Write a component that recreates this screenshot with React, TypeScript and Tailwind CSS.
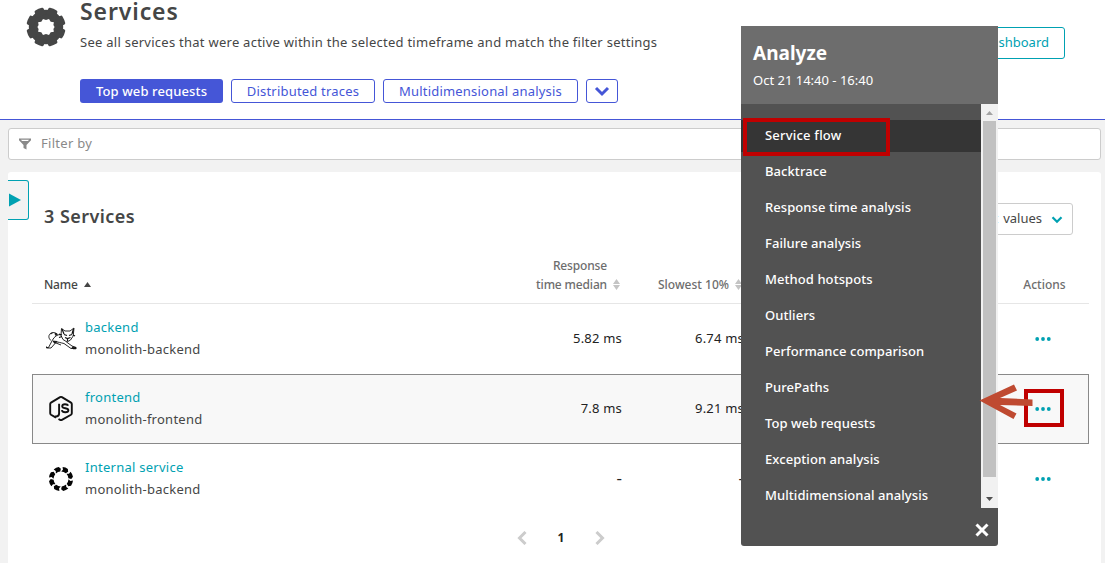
import React from "react";

const menuItems = [
  "Service flow",
  "Backtrace",
  "Response time analysis",
  "Failure analysis",
  "Method hotspots",
  "Outliers",
  "Performance comparison",
  "PurePaths",
  "Top web requests",
  "Exception analysis",
  "Multidimensional analysis",
];

function GearIcon() {
  return (
    <svg className="block h-10 w-10" viewBox="0 0 40 40" fill="#454646">
      <path
        fillRule="evenodd"
        d="M20 2.800a17.200 17.200 0 1 0 0 34.400a17.200 17.200 0 1 0 0-34.400zM17 12L20 13L23 12L24.700 14.700L27.900 15.300L27.400 18L28.600 20L27.400 22L27.900 24.700L24.700 25.300L23 28L20 27L17 28L15.300 25.300L12.100 24.700L12.600 22L11.400 20L12.600 18L12.100 15.300L15.300 14.700z"
      />
      {[22.5, 67.5, 112.5, 157.5, 202.5, 247.5, 292.5, 337.5].map((a) => (
        <path key={a} d="M15.200 2Q15.200 .8 16.500 .7Q20 .1 23.500 .7Q24.800 .8 24.800 2L25.300 8H14.700z" transform={`rotate(${a} 20 20)`} />
      ))}
    </svg>
  );
}

function Chevron({ className, d = "M2 3l6 6l6-6", box = "0 0 16 12" }: { className: string; d?: string; box?: string }) {
  return (
    <svg className={className} viewBox={box} fill="none" stroke="currentColor" strokeWidth="3">
      <path d={d} />
    </svg>
  );
}

function SortIcon() {
  return (
    <svg className="block h-[11px] w-[7px]" viewBox="0 0 7 11" fill="#c4c4c4">
      <path d="M3.500 0L7 5H0zM3.500 11L0 6h7z" />
    </svg>
  );
}

function TomcatIcon() {
  return (
    <svg className="block h-[24px] w-[32px]" viewBox="0 0 32 24" fill="none" stroke="#111" strokeWidth=".9">
      <path d="M16.500 1.500l3.500 2.500h5l4-3-.8 8-2.700 4-3.500 2-4-2.500-2-4z" />
      <path d="M17 2l2 5M28.500 2l-1.500 5M19 7.500l3 1M27 7.500l-3 1M20 10.500l2.500 1 3-1M22.500 12v2M17 8l-3-.8M17 9.500l-3 1M28 8l2 1" strokeWidth="1.200" />
      <path d="M16 7.500c-4 0-6.500 2-8.500 5.500l-4 7.500H1.500M8.500 14.500l1.500 2-4 4.500H1.500v-1.500" />
      <path d="M12 7c-2-2-6-2-7.500.5S4.500 12.500 6 13.500M5.500 7l2-.8" />
      <path d="M9 15c4-.5 7 1 10 1.500l7 5h4.500M21.500 15l5.500 4 4 1.500v1M11 16l5 2" />
      <path d="M8 14l4 .5-2 2zM10 6.300l2.500 1-2 1zM27 20l4 .5v1.300h-3z" fill="#111" strokeWidth=".8" />
    </svg>
  );
}

function NodeIcon() {
  return (
    <svg className="block h-[28px] w-[26px]" viewBox="0 0 26 28" fill="none" stroke="#111" strokeWidth="1.900" strokeLinejoin="round">
      <path d="M8 22.600l-5-2.900q-.8-.5-.8-1.400V9q0-.9.800-1.400L12.100 2.100q.9-.5 1.800 0L23 7.600q.8.500.8 1.400v9.300q0 .9-.8 1.400l-9.100 5.200q-.9.500-1.800 0l-1.600-.9" />
      <path d="M11.100 8.700v9.600q0 3-2.600 3.200l-1.300-.3" />
      <path d="M20 10.800q-.4-1.600-3-1.600-2.800 0-2.800 2c0 3 6.200 1.200 6.200 4.100q0 2-3.100 2-3.100 0-3.400-2.200" />
    </svg>
  );
}

function InternalIcon() {
  return (
    <svg className="block h-[26px] w-[26px]" viewBox="0 0 26 26" fill="#050505">
      {[0, 45, 90, 135, 180, 225, 270, 315].map((a) => (
        <path key={a} d="M10 1.300Q13 .4 15.600 1.100L16.900 3.500L15.200 5.900Q13 5.200 10.400 5.900L11.300 3.600z" transform={`rotate(${a + 22} 13 13)`} />
      ))}
    </svg>
  );
}

const rows = [
  { name: "backend", sub: "monolith-backend", median: "5.82 ms", slow: "6.74 ms", icon: <TomcatIcon /> },
  { name: "frontend", sub: "monolith-frontend", median: "7.8 ms", slow: "9.21 ms", icon: <NodeIcon />, selected: true },
  { name: "Internal service", sub: "monolith-backend", median: "-", slow: "-", icon: <InternalIcon /> },
];

function Value({ text }: { text: string }) {
  return (
    <div className="pb-[2px] text-right leading-5 text-[#222]">
      <span className={text === "-" ? "text-[17px] leading-5" : "tracking-[0.2px]"}>{text}</span>
    </div>
  );
}

function Dots() {
  return (
    <svg className="block h-[5px] w-4" viewBox="0 0 16 5" fill="#00a1b2">
      <circle cx="2.200" cy="2" r="1.900" />
      <circle cx="8" cy="2" r="1.900" />
      <circle cx="13.800" cy="2" r="1.900" />
    </svg>
  );
}

function AnalyzeMenu() {
  return (
    <div className="absolute left-[741px] top-[26px] flex h-[520px] w-[257px] flex-col overflow-hidden rounded-b-[3px] bg-[#525252] text-white">
      <div className="h-[78px] shrink-0 bg-[#6d6d6d] pl-3 pt-[14px]">
        <h2 className="text-[19px] font-bold leading-[26px]">Analyze</h2>
        <p className="mt-[4px] text-[13px] leading-5">Oct 21 14:40 - 16:40</p>
      </div>
      <div className="flex h-[404px] shrink-0">
        <ul className="flex flex-1 flex-col gap-1 pt-4">
          {menuItems.map((item, i) => (
            <li
              key={item}
              className={
                i === 0
                  ? "flex h-8 shrink-0 items-center bg-[#353535] pb-px pl-6 text-[13px] font-medium tracking-[0.2px]"
                  : "flex h-8 shrink-0 items-center pb-px pl-6 text-[13px] font-medium tracking-[0.07px]"
              }
            >
              {item}
            </li>
          ))}
        </ul>
        <div className="flex w-[17px] flex-col items-center bg-[#f1f1f1]">
          <svg className="h-[17px] w-[17px]" viewBox="0 0 17 17" fill="#a3a3a3">
            <path d="M8.500 7l3.500 4H5z" />
          </svg>
          <div className="h-[356px] w-[13px] bg-[#c1c1c1]" />
          <svg className="mt-auto h-[17px] w-[17px]" viewBox="0 0 17 17" fill="#505050">
            <path d="M8.500 10L5 6h7z" />
          </svg>
        </div>
      </div>
      <div className="flex flex-1 items-center justify-end pr-[9px] pt-[6px]">
        <svg className="h-[14px] w-[14px]" viewBox="0 0 14 14" stroke="#fff" strokeWidth="3">
          <path d="M1.500 1.500l11 11M12.500 1.500l-11 11" />
        </svg>
      </div>
    </div>
  );
}

export default function App() {
  return (
    <div className="relative h-[563px] w-[1105px] overflow-hidden bg-[#f2f2f2] font-['Noto_Sans',sans-serif] text-[13px] text-[#454646]">
      <header className="flex h-[120px] border-b border-[#4556d7] bg-white pl-[26px]">
        <div className="w-[54px] pt-[7px]">
          <GearIcon />
        </div>
        <div className="flex-1">
          <h1 className="text-[23px] font-semibold leading-[22px] tracking-[0.9px]">Services</h1>
          <p className="mt-[10px] leading-5 tracking-[0.26px]">See all services that were active within the selected timeframe and match the filter settings</p>
          <div className="mt-[27px] flex gap-2 text-[#4556d7] tracking-[0.2px]">
            <button className="h-6 w-[143px] rounded-[3px] bg-[#4556d7] font-medium leading-[22px] text-white tracking-[0.13px]">Top web requests</button>
            <button className="h-6 w-36 rounded-[3px] border border-[#4556d7] leading-[22px]">Distributed traces</button>
            <button className="h-6 w-[195px] rounded-[3px] border border-[#4556d7] leading-[22px]">Multidimensional analysis</button>
            <button className="flex h-6 w-8 items-center justify-center rounded-[3px] border border-[#4556d7]">
              <Chevron className="h-3 w-4" />
            </button>
          </div>
        </div>
        <div className="pr-10 pt-[27px]">
          <button className="h-8 w-[160px] rounded-[3px] border border-[#00a1b2] pr-[15px] text-right text-[#00a1b2]">Pin to dashboard</button>
        </div>
      </header>

      <div className="ml-2 mt-2 flex h-8 w-[1093px] items-center rounded-[3px] border border-[#ccc] bg-white pl-[10px] text-[#898989]">
        <svg className="h-3 w-3" viewBox="0 0 12 12" fill="#898989">
          <path fillRule="evenodd" d="M0 .5h12v1.800L7.500 7v4.500l-3-1.500V7L0 2.300zM2 1.700l1 1.200h6l1-1.200z" />
        </svg>
        <span className="ml-[10px] tracking-[0.3px]">Filter by</span>
      </div>

      <main className="ml-2 mt-3 h-[391px] w-[1093px] rounded-t-[3px] bg-white pt-2">
        <div className="flex h-[60px]">
          <div className="flex h-10 w-[21px] items-center rounded-r-[3px] border border-l-0 border-[#00a1b2] bg-[#f2f2f2] pl-[1px]">
            <svg className="h-[14px] w-3" viewBox="0 0 12 14" fill="#00a1b2">
              <path d="M0 .5L12 7L0 13.500z" />
            </svg>
          </div>
          <h2 className="ml-[15px] mt-[23px] text-[18px] font-semibold leading-[26px] tracking-[0.45px]">3 Services</h2>
          <div className="ml-auto mr-7 mt-[23px] flex h-8 w-[170px] items-center justify-end rounded-[3px] border border-[#ccc] pr-[9px]">
            <span className="mr-[5px]">Current</span>
            <span>values</span>
            <Chevron className="ml-[9px] h-[9px] w-3 text-[#00a1b2]" />
          </div>
        </div>

        <div className="ml-6 w-[1057px]">
          <div className="grid h-[64px] grid-cols-[481px_110px_122px_1fr_90px] items-end border-b border-[#e6e6e6] pb-[9px] text-[12px] font-medium leading-[19px] text-[#6d6d6d]">
            <div className="flex items-center pl-3 text-[#454646]">
              <span className="tracking-[-0.2px]">Name</span>
              <svg className="ml-[6px] h-[5px] w-[7px]" viewBox="0 0 7 5" fill="#454646">
                <path d="M3.500 0L7 5H0z" />
              </svg>
            </div>
            <div className="flex items-end justify-end pr-[3px]">
              <span className="text-right tracking-[-0.15px]">
                Response
                <br />
                time median
              </span>
              <span className="mb-1 ml-[6px]">
                <SortIcon />
              </span>
            </div>
            <div className="flex items-end justify-end pr-[3px]">
              Slowest 10%
              <span className="mb-1 ml-[6px]">
                <SortIcon />
              </span>
            </div>
            <div />
            <div className="pl-px text-center">Actions</div>
          </div>
          {rows.map((r, i) => (
            <div
              key={i}
              className={
                r.selected
                  ? "grid h-[70px] grid-cols-[479px_110px_122px_1fr_90px] items-center border border-[#898989] bg-[#f8f8f8]"
                  : "grid h-[70px] grid-cols-[479px_110px_122px_1fr_90px] items-center border border-transparent"
              }
            >
              <div className="flex items-center pl-3">
                <div className="flex w-8 justify-center">{r.icon}</div>
                <div className="ml-2 pb-[2px] leading-[22px] tracking-[0.26px]">
                  <div className="text-[#00a1b2]">{r.name}</div>
                  <div>{r.sub}</div>
                </div>
              </div>
              <Value text={r.median} />
              <Value text={r.slow} />
              <div />
              <div className="flex justify-center">
                <Dots />
              </div>
            </div>
          ))}
          <div className="flex h-[47px] items-center justify-center gap-[31px] pl-px">
            <Chevron className="h-[14px] w-[10px] text-[#ccc]" box="0 0 10 14" d="M8.500 1l-6 6l6 6" />
            <span className="text-[12px] font-bold text-[#222]">1</span>
            <Chevron className="h-[14px] w-[10px] text-[#ccc]" box="0 0 10 14" d="M1.500 1l6 6l-6 6" />
          </div>
        </div>
      </main>

      <AnalyzeMenu />
      <div className="absolute left-[743px] top-[118px] h-[38px] w-[147px] border-4 border-[#c00000]" />
      <div className="absolute left-[1024px] top-[389px] h-[38px] w-10 border-4 border-[#c00000]" />
      <svg className="absolute left-[978px] top-[383px] h-[38px] w-[56px]" viewBox="0 0 56 38" fill="#bf4a31">
        <path d="M1.500 17.500L36 1.500l3 6L22 15l32.500 1.500v6.500L22 22l16.500 8.500-3 5.500z" />
      </svg>
    </div>
  );
}
